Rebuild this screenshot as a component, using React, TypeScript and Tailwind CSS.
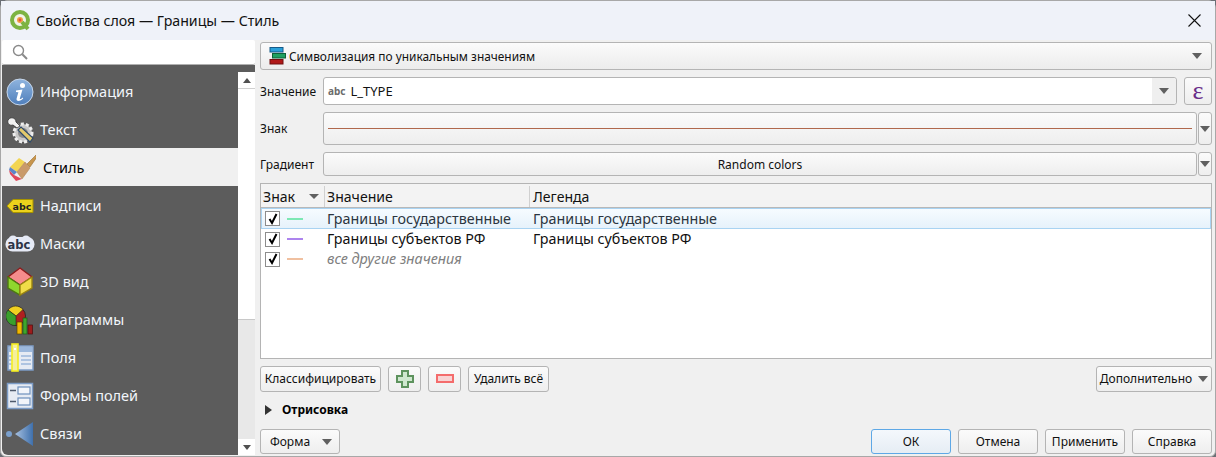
import React from "react";

const btnBase = "flex items-center justify-center rounded-[3px] border bg-gradient-to-b text-[12px] text-[#111]";
const btn = `${btnBase} border-[#b4b4b4] from-[#fbfbfb] to-[#eeeeee]`;
const arrow = "h-0 w-0 border-x-[5px] border-t-[6px] border-x-transparent border-t-[#606060]";

function InfoIcon() {
  return (
    <svg width="28" height="28" viewBox="0 0 28 28">
      <defs>
        <linearGradient id="ig" x1="0" y1="0" x2="0" y2="1">
          <stop offset="0" stopColor="#8fb4de" />
          <stop offset="1" stopColor="#4f7fbc" />
        </linearGradient>
      </defs>
      <circle cx="14" cy="14" r="13" fill="url(#ig)" stroke="#c6d6ea" strokeWidth="1" />
      <circle cx="16.5" cy="7.5" r="2.5" fill="#fff" />
      <path d="M10 12.5 L16.5 11.5 L13.8 20.5 C13.6 21.4 14.5 21.5 16.8 19.6 L17.2 20.6 C14.5 23.5 9.8 24 10.6 20.5 L12.4 14.2 L10 14 Z" fill="#fff" />
    </svg>
  );
}

function ToolsIcon() {
  return (
    <svg width="28" height="28" viewBox="0 0 28 28">
      <circle cx="17" cy="17" r="9" fill="#c8c8c8" stroke="#eeeeee" strokeWidth="3" strokeDasharray="3 2" />
      <circle cx="17" cy="17" r="5" fill="#8a8a8a" />
      <path d="M2 4 C5 0 10 2 10 6 L14 10 L11 12 L7 9 C4 10 1 8 2 4 Z" fill="#f2f2f2" stroke="#333" strokeWidth="0.8" />
      <path d="M12 14 L15 11 L27 22 L24 26 Z" fill="#e2c96c" stroke="#2e4a6c" strokeWidth="1.2" />
    </svg>
  );
}

function BrushIcon() {
  return (
    <svg width="28" height="28" viewBox="0 0 28 28">
      <path d="M2 13 L11 4 L17 8 L9 18 Z" fill="#f2d552" />
      <path d="M2 13 L9 18 L6 21 L1 16 Z" fill="#5c86c8" />
      <path d="M1 16 L6 21 L14 25 L8 27 L2 20 Z" fill="#e0485a" />
      <path d="M9 18 L17 8 L22 14 L14 25 Z" fill="#c99a6a" stroke="#a87c50" strokeWidth="0.5" />
      <path d="M19 10 L28 1 L29 3 L22 13 Z" fill="#c8964e" stroke="#9a7034" strokeWidth="0.6" />
    </svg>
  );
}

function LabelIcon() {
  return (
    <svg width="28" height="20" viewBox="0 0 28 20">
      <path d="M1 10 L7 3.5 H27 V16.5 H7 Z" fill="#ecd21c" stroke="#a89400" strokeWidth="1" />
      <text x="6.5" y="13.5" fontFamily="'DejaVu Sans', sans-serif" fontSize="9.5" fontWeight="700" fill="#222">abc</text>
    </svg>
  );
}

function MaskIcon() {
  return (
    <svg width="30" height="20" viewBox="0 0 30 20">
      <rect x="0.5" y="3" width="29" height="14.5" rx="7" fill="#e6eaf6" />
      <circle cx="8" cy="6" r="4.5" fill="#e6eaf6" />
      <circle cx="21" cy="6" r="4.5" fill="#e6eaf6" />
      <text x="2.5" y="14.5" fontFamily="'DejaVu Sans', sans-serif" fontSize="11.5" fontWeight="700" fill="#2c3346">abc</text>
    </svg>
  );
}

function CubeIcon() {
  return (
    <svg width="28" height="30" viewBox="0 0 28 30">
      <path d="M14 1 L26 10 L14 18 L2 10 Z" fill="#f58c8c" stroke="#8c1c1c" strokeWidth="1.4" />
      <path d="M2 10 L14 18 V28 L2 21 Z" fill="#8fd62e" stroke="#4d7a10" strokeWidth="1.4" />
      <path d="M26 10 L14 18 V28 L26 21 Z" fill="#f0dc48" stroke="#9a8410" strokeWidth="1.4" />
    </svg>
  );
}

function ChartIcon() {
  return (
    <svg width="28" height="30" viewBox="0 0 28 30">
      <circle cx="10" cy="11" r="9.5" fill="#b02020" stroke="#222" strokeWidth="0.8" />
      <path d="M10 11 L2 5 A9.5 9.5 0 0 1 17 4.5 Z" fill="#f0d020" stroke="#222" strokeWidth="0.6" />
      <path d="M10 11 L2 5 A9.5 9.5 0 0 0 10 20.5 Z" fill="#3aa02c" stroke="#222" strokeWidth="0.6" />
      <rect x="11" y="17" width="5" height="12" fill="#f2b800" stroke="#5a4300" strokeWidth="0.7" />
      <rect x="17" y="13" width="4" height="16" fill="#3fa52d" stroke="#1f5a14" strokeWidth="0.7" />
      <rect x="22" y="20" width="4.5" height="9" fill="#9c1c1c" stroke="#4e0c0c" strokeWidth="0.7" />
    </svg>
  );
}

function FieldsIcon() {
  return (
    <svg width="28" height="30" viewBox="0 0 28 30">
      <rect x="2" y="3" width="25" height="24" fill="#e6ebf3" stroke="#7c9cc6" strokeWidth="1.5" />
      <rect x="3" y="4" width="23" height="5" fill="#9cb8dc" />
      <path d="M15 13 H25 M15 17 H25 M15 21 H25 M3 13 H10 M3 17 H10 M3 21 H10" stroke="#9cb8dc" strokeWidth="1.4" />
      <rect x="6" y="1" width="6" height="27" fill="#f4ef9c" stroke="#f6ee20" strokeWidth="1.6" />
      <rect x="8" y="5" width="2" height="2" fill="#fff" />
    </svg>
  );
}

function FormIcon() {
  return (
    <svg width="28" height="28" viewBox="0 0 28 28">
      <rect x="1.5" y="1.5" width="25" height="25" fill="#e6ebf3" stroke="#7c9cc6" strokeWidth="1.5" />
      <rect x="12" y="5" width="12" height="7" fill="#f2f5fa" stroke="#6d8fbc" strokeWidth="1.2" />
      <rect x="12" y="16" width="12" height="7" fill="#f2f5fa" stroke="#6d8fbc" strokeWidth="1.2" />
      <path d="M4 8.5 H10 M4 19.5 H10" stroke="#4e5a6c" strokeWidth="1.6" />
    </svg>
  );
}

function JoinIcon() {
  return (
    <svg width="30" height="26" viewBox="0 0 30 26">
      <defs>
        <linearGradient id="jg" x1="0" y1="0" x2="1" y2="0">
          <stop offset="0" stopColor="#a6c0e0" />
          <stop offset="1" stopColor="#3f70ac" />
        </linearGradient>
      </defs>
      <circle cx="4" cy="13" r="3" fill="#7ba0cd" />
      <path d="M10 13 L28 1 V25 Z" fill="url(#jg)" />
    </svg>
  );
}

function RendererIcon() {
  return (
    <svg width="18" height="18" viewBox="0 0 18 18">
      <rect x="1" y="0.5" width="13" height="4.5" fill="#2aa0d8" stroke="#155a88" />
      <rect x="3.5" y="6.5" width="13" height="4.5" fill="#1ea060" stroke="#0d6038" />
      <rect x="1" y="12.5" width="13" height="4.5" fill="#b01818" stroke="#701010" />
    </svg>
  );
}

const navItems: { label: string; icon: React.ReactNode; active?: boolean }[] = [
  { label: "Информация", icon: <InfoIcon /> },
  { label: "Текст", icon: <ToolsIcon /> },
  { label: "Стиль", icon: <BrushIcon />, active: true },
  { label: "Надписи", icon: <LabelIcon /> },
  { label: "Маски", icon: <MaskIcon /> },
  { label: "3D вид", icon: <CubeIcon /> },
  { label: "Диаграммы", icon: <ChartIcon /> },
  { label: "Поля", icon: <FieldsIcon /> },
  { label: "Формы полей", icon: <FormIcon /> },
  { label: "Связи", icon: <JoinIcon /> },
];

function Sidebar() {
  return (
    <div className="flex w-[253px] flex-col">
      <div className="flex h-[25px] items-center rounded-[2px] border-b border-[#b0b0b0] bg-white pl-[10px]">
        <svg width="16" height="16" viewBox="0 0 16 16" fill="none" stroke="#8a8a8a" strokeWidth="1.4">
          <circle cx="6.5" cy="6.5" r="5" />
          <path d="M10.3 10.3 L15 15" strokeWidth="2" />
        </svg>
      </div>
      <div className="flex h-[390px] flex-col rounded-bl-[6px] bg-[#5c5c5c]">
        <div className="h-[7px]" />
        <div className="flex min-h-0 flex-1">
          <div className="flex w-[236px] flex-col">
            {navItems.map((it) => (
              <div
                key={it.label}
                className={`flex h-[38px] shrink-0 items-center pt-[1px] ${it.active ? "bg-[#f0f0f0] text-[#000]" : "text-[#f2f6fb]"}`}
              >
                <div className={`flex h-full shrink-0 items-center justify-center ${it.active ? "w-[40px]" : "w-[36px]"}`}>{it.icon}</div>
                <span className={`text-[14.5px] ${it.active ? "ml-[1px]" : "ml-[2px]"}`}>{it.label}</span>
              </div>
            ))}
          </div>
          <div className="flex w-[17px] flex-col bg-[#e8e8e8]">
            <div className="flex h-[17px] items-center justify-center border-b border-[#d0d0d0] bg-white">
              <div className="h-0 w-0 border-x-[4px] border-b-[5px] border-x-transparent border-b-[#505050]" />
            </div>
            <div className="h-[231px] border-b border-[#c8c8c8] bg-white" />
            <div className="flex-1" />
            <div className="flex h-[16px] items-center justify-center bg-white">
              <div className="h-0 w-0 border-x-[4px] border-t-[5px] border-x-transparent border-t-[#505050]" />
            </div>
          </div>
        </div>
      </div>
    </div>
  );
}

function CheckBox() {
  return (
    <div className="flex h-[15px] w-[15px] items-center justify-center border border-[#8c8c8c] bg-white">
      <svg width="12" height="12" viewBox="0 0 12 12" fill="none" stroke="#000" strokeWidth="2">
        <path d="M2.5 6 L5 10 L9.5 1" />
      </svg>
    </div>
  );
}

function TableRow({ color, value, legend, selected, muted }: { color: string; value: string; legend?: string; selected?: boolean; muted?: boolean }) {
  const rowClass = selected
    ? "h-[21px] border-[#a9d3f2] from-[#f6fbff] to-[#e6f2fb] bg-gradient-to-b"
    : "h-[20px] border-transparent";
  const valueClass = muted
    ? "text-[14.4px] italic text-[#808080]"
    : selected
      ? "text-[14.3px] text-[#2b3540]"
      : "text-[14.3px] text-[#111]";
  return (
    <div className={`flex items-center border ${rowClass}`}>
      <div className="ml-[3px] w-[22px] shrink-0">
        <CheckBox />
      </div>
      <div className="h-[2px] w-[16px] shrink-0" style={{ backgroundColor: color }} />
      <div className={`ml-[24px] w-[206px] shrink-0 ${valueClass}`}>{value}</div>
      <div className={`text-[14.3px] ${selected ? "text-[#2b3540]" : "text-[#111]"}`}>{legend}</div>
    </div>
  );
}

export default function App() {
  return (
    <div
      className="flex h-[457px] w-[1216px] flex-col overflow-hidden bg-[#6b6f75] text-[#111]"
      style={{ fontFamily: "'Noto Sans', 'Open Sans', sans-serif" }}
    >
      <div className="flex h-[457px] flex-col rounded-t-[8px] rounded-b-[6px] border border-[#a8a8a8] bg-[#f0f0f0]">
        {/* Title bar */}
        <div className="flex h-[39px] shrink-0 items-center bg-[#eff2f9] pl-[9px] pr-[14px]">
          <svg width="21" height="21" viewBox="0 0 21 21">
            <circle cx="10" cy="10" r="8" fill="#f2f2e8" stroke="#7cb342" strokeWidth="4" />
            <circle cx="10" cy="10" r="3" fill="#f0a040" />
            <path d="M12 12 L18 19" stroke="#7cb342" strokeWidth="4" />
            <circle cx="10" cy="10" r="1.4" fill="#e05040" />
          </svg>
          <span className="ml-[5px] text-[14.2px] text-[#111]">Свойства слоя — Границы — Стиль</span>
          <svg className="ml-auto" width="13" height="13" viewBox="0 0 13 13" fill="none" stroke="#111" strokeWidth="1.1">
            <path d="M0.5 0.5 L12.5 12.5 M12.5 0.5 L0.5 12.5" />
          </svg>
        </div>

        <div className="flex min-h-0 flex-1 pl-[1px]">
          <Sidebar />

          {/* Symbology panel */}
          <div className="ml-[5px] flex w-[952px] flex-col">
            <div className="mt-[2px] flex h-[28px] items-center rounded-[3px] border border-[#b4b4b4] bg-gradient-to-b from-[#fbfbfb] to-[#ececec] pl-[8px] pr-[9px]">
              <RendererIcon />
              <span className="ml-[2px] pt-[1px] text-[11.9px] text-[#111]">Символизация по уникальным значениям</span>
              <div className={`ml-auto ${arrow}`} />
            </div>

            <div className="mt-[7px] flex h-[28px] items-center">
              <span className="w-[63px] pt-[1px] text-[12px]">Значение</span>
              <div className="flex h-full w-[855px] items-center rounded-[3px] border border-[#b4b4b4] bg-white pl-[4px]">
                <span className="text-[10px] font-bold text-[#6c6c6c]">abc</span>
                <span className="ml-[5px] pt-[1px] text-[13px]">L_TYPE</span>
                <div className="ml-auto flex h-full w-[24px] items-center justify-center rounded-r-[3px] bg-[#efefef]">
                  <div className={arrow} />
                </div>
              </div>
              <div className={`ml-[7px] h-full w-[28px] ${btn}`}>
                <span className="text-[26px] leading-none text-[#6a2c88]" style={{ fontFamily: "'Liberation Serif', serif" }}>ε</span>
              </div>
            </div>

            <div className="mt-[7px] flex h-[33px] items-center">
              <span className="w-[63px] pt-[1px] text-[12px]">Знак</span>
              <div className={`h-full w-[874px] px-[4px] ${btn}`}>
                <div className="h-[1px] w-full bg-[#b0684c]" />
              </div>
              <div className={`ml-[1px] h-full w-[14px] ${btn}`}>
                <div className={arrow} />
              </div>
            </div>

            <div className="mt-[7px] flex h-[24px] items-center">
              <span className="w-[63px] pt-[1px] text-[12px]">Градиент</span>
              <div className={`h-full w-[874px] pt-[1px] ${btn}`}>Random colors</div>
              <div className={`ml-[1px] h-full w-[14px] ${btn}`}>
                <div className={arrow} />
              </div>
            </div>

            {/* Categories table */}
            <div className="mt-[7px] flex h-[176px] flex-col border border-[#b4b4b4] bg-white">
              <div className="flex h-[24px] shrink-0 items-center border-b border-[#b8b8b8] bg-[#f3f3f3] pt-[2px] text-[14.1px]">
                <div className="flex h-full w-[64px] items-center justify-between border-r border-[#d0d0d0] pl-[2px] pr-[5px]">
                  Знак
                  <div className="h-0 w-0 border-x-[5px] border-t-[5px] border-x-transparent border-t-[#606060]" />
                </div>
                <div className="flex h-full w-[205px] items-center border-r border-[#d0d0d0] pl-[2px]">Значение</div>
                <div className="pl-[3px]">Легенда</div>
              </div>
              <TableRow color="#7de8b4" value="Границы государственные" legend="Границы государственные" selected />
              <TableRow color="#ad84ee" value="Границы субъектов РФ" legend="Границы субъектов РФ" />
              <TableRow color="#f0c0a0" value="все другие значения" muted />
            </div>

            <div className="mt-[7px] flex h-[26px]">
              <div className={`w-[121px] ${btn}`}>Классифицировать</div>
              <div className={`ml-[7px] w-[33px] ${btn}`}>
                <svg width="18" height="18" viewBox="0 0 18 18">
                  <path d="M6 1 H12 V6 H17 V12 H12 V17 H6 V12 H1 V6 H6 Z" fill="#cfe8cf" stroke="#5e935e" strokeWidth="2" />
                </svg>
              </div>
              <div className={`ml-[7px] w-[33px] ${btn}`}>
                <svg width="18" height="10" viewBox="0 0 18 10">
                  <rect x="1" y="1" width="16" height="7" fill="#f8d4d4" stroke="#f46c6c" strokeWidth="2" />
                </svg>
              </div>
              <div className={`ml-[7px] w-[81px] ${btn}`}>Удалить всё</div>
              <div className={`ml-auto w-[116px] gap-[6px] ${btn}`}>
                Дополнительно
                <div className={arrow} />
              </div>
            </div>

            <div className="mt-[8px] flex h-[19px] items-center pl-[5px]">
              <div className="h-0 w-0 border-y-[5px] border-l-[7px] border-y-transparent border-l-[#333]" />
              <span className="ml-[10px] text-[12px] font-bold text-black">Отрисовка</span>
            </div>

            <div className="mt-[10px] flex h-[25px]">
              <div className={`w-[80px] gap-[12px] pl-[2px] ${btn}`}>
                Форма
                <div className={arrow} />
              </div>
              <div className="ml-auto flex gap-[7px]">
                <div className={`w-[80px] ${btnBase} border-[#5ea8e6] from-[#f4f8fc] to-[#e6edf4]`}>ОК</div>
                <div className={`w-[80px] ${btn}`}>Отмена</div>
                <div className={`w-[80px] ${btn}`}>Применить</div>
                <div className={`w-[80px] ${btn}`}>Справка</div>
              </div>
            </div>
          </div>
        </div>
      </div>
    </div>
  );
}
